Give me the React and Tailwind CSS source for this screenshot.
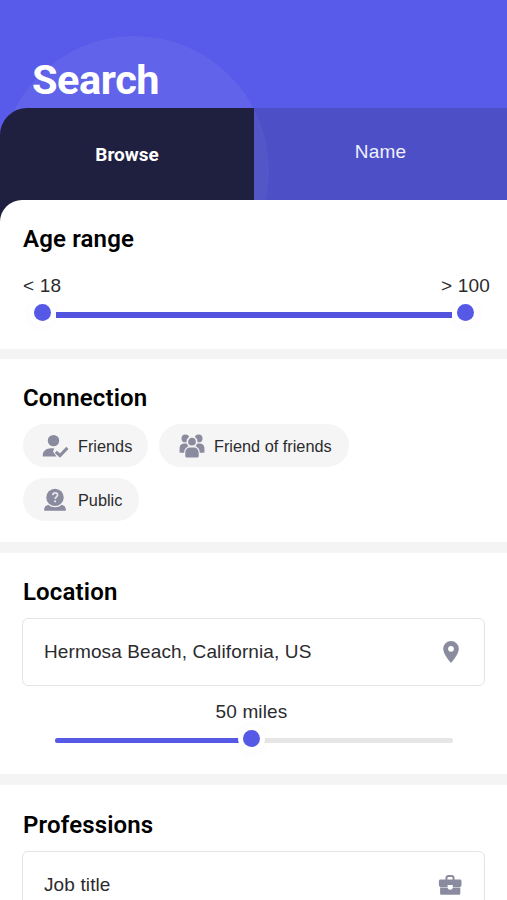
const roboto = "font-[Roboto,sans-serif]";

function Title({ children, className = "" }) {
  return (
    <h2 className={`${roboto} w-fit whitespace-nowrap text-[24px] leading-[28px] font-semibold tracking-[0.15px] text-black ${className}`}>
      {children}
    </h2>
  );
}

function FriendIcon() {
  return (
    <svg width="27" height="24" viewBox="0 0 27 24" className="shrink-0 fill-[#8b8b9f]">
      <circle cx="11.500" cy="6.600" r="5.700" />
      <path d="M.8 22.500v-1.500c0-4 3.600-6.800 8.200-6.800 1.300 0 2.500.1 3.500.5-1.700 1.500-1.600 3.200-.3 4.600l2.300 3.200z" />
      <path d="M13.800 17.800l4.200 3.700 7.400-7.600" fill="none" stroke="#8b8b9f" strokeWidth="3.100" />
    </svg>
  );
}

function GroupIcon() {
  return (
    <svg width="26" height="24" viewBox="0 0 26 24" className="shrink-0 fill-[#8b8b9f]">
      <circle cx="6.400" cy="4.400" r="3.900" />
      <circle cx="19.600" cy="4.400" r="3.900" />
      <path d="M.6 18.800v-4.600c0-3 2-4.600 4.900-4.600h3l1 2.300-2 1.500c-1.600 1.200-2.300 2.700-2.300 5.400z" />
      <path d="M25.400 18.800v-4.600c0-3-2-4.600-4.900-4.600h-3l-1 2.300 2 1.500c1.600 1.200 2.300 2.700 2.300 5.400z" />
      <circle cx="13" cy="7.700" r="4.700" className="stroke-[#f5f5f5]" strokeWidth="1.700" />
      <path d="M6.300 23.400v-4.600c0-3.400 2.200-5.300 5.200-5.300h3c3 0 5.200 1.900 5.200 5.300v3.200c0 .9-.5 1.400-1.400 1.400H7.700c-.9 0-1.400-.5-1.400-1.400z" />
    </svg>
  );
}

function PublicIcon() {
  return (
    <svg width="24" height="24" viewBox="0 0 24 24" className="mr-[2px] shrink-0 fill-[#8b8b9f]">
      <circle cx="12" cy="9.400" r="8.700" />
      <path d="M1.200 22.800v-1.600c0-2.300 1.700-3.900 4.200-4.500 2 1.800 4.100 2.500 6.600 2.500s4.600-.7 6.600-2.500c2.500.6 4.200 2.200 4.200 4.500v1.600z" />
      <path d="M9.700 7.200c.2-1.500 1.100-2.400 2.500-2.400 1.500 0 2.400.9 2.400 2.200 0 1.800-2.400 2.100-2.400 4" fill="none" stroke="#e6e6ec" strokeWidth="1.700" />
      <circle cx="12.100" cy="13.300" r="1.100" className="fill-[#e6e6ec]" />
    </svg>
  );
}

function PinIcon() {
  return (
    <svg width="16" height="22" viewBox="0 0 16 22" className="ml-[1px] shrink-0 fill-[#8b8b9f]">
      <path fillRule="evenodd" d="M8 0a7.800 7.800 0 0 0-7.800 7.800C.2 13.500 8 22 8 22s7.800-8.500 7.800-14.200A7.800 7.800 0 0 0 8 0zm0 4.900a2.900 2.900 0 1 1 0 5.800 2.900 2.900 0 0 1 0-5.800z" />
    </svg>
  );
}

function BriefcaseIcon() {
  return (
    <svg width="24" height="22" viewBox="0 0 24 22" className="shrink-0 fill-[#8b8b9f]">
      <path d="M8.400 6V4.200c0-1.300.9-2.200 2.200-2.200h2.800c1.300 0 2.200.9 2.200 2.200V6" fill="none" stroke="#8b8b9f" strokeWidth="2" />
      <path d="M2.500 5.400h19.400c1 0 1.600.6 1.600 1.600v4c0 1-.7 1.900-1.600 1.900h-7.100v-1.900H9.600v1.900H2.500c-.9 0-1.600-.9-1.600-1.900V7c0-1 .6-1.600 1.600-1.600z" />
      <path d="M2.100 13.600h7.500c.2 1.500 1.200 2.200 2.600 2.200s2.400-.7 2.600-2.200h7.500v5.600c0 1-.6 1.600-1.600 1.600h-17c-1 0-1.600-.6-1.600-1.600z" />
    </svg>
  );
}

function Chip({ icon, label, className = "" }) {
  return (
    <div className={`flex h-[43px] items-center rounded-full bg-[#f5f5f5] ${className}`}>
      <span className="flex w-[27px] justify-center">{icon}</span>
      <span className="ml-[9px] whitespace-nowrap text-[16.300px] leading-[20px] text-[#2b2b2e]">{label}</span>
    </div>
  );
}

function Thumb({ className }) {
  return (
    <span className={`absolute flex size-[27px] items-center justify-center rounded-full bg-white shadow-[0_1px_8px_rgba(0,0,0,0.03)] ${className}`}>
      <span className="size-[16.400px] rounded-full bg-[#5658e6]" />
    </span>
  );
}

function Field({ text, icon }) {
  return (
    <div className="mx-[22px] flex h-[68px] items-center justify-between rounded-[6px] border border-[#e4e4e6] bg-white pr-[22px] pl-[21px]">
      <span className="whitespace-nowrap text-[19px] leading-[24px] tracking-[0.120px] text-[#2b2b2e]">{text}</span>
      <span className="flex w-[24px] justify-center">{icon}</span>
    </div>
  );
}

export default function App() {
  return (
    <main className="h-[900px] w-[507px] overflow-hidden bg-[#f4f4f4] font-['Liberation_Sans',Arial,sans-serif]">
      <header className="relative h-[222px] overflow-hidden bg-[#585ae9]">
        <span className="absolute top-[36px] left-0 size-[269px] rounded-full bg-white/6" />
        <div className="relative flex h-[108px] items-start pt-[56px] pl-[32px]">
          <h1 className={`${roboto} text-[41.500px] leading-[48px] font-bold tracking-[-0.450px] text-white`}>Search</h1>
        </div>
        <nav className="relative flex h-[114px]">
          <div className="flex w-[254px] justify-center rounded-tl-[27px] bg-[#1f1f40] pt-[35px]">
            <span className={`${roboto} text-[19px] leading-[24px] font-bold text-white`}>Browse</span>
          </div>
          <div className="flex flex-1 justify-center bg-[#242c52]/24 pt-[32px]">
            <span className="text-[19px] leading-[24px] tracking-[0.150px] text-[#f0f0ff]">Name</span>
          </div>
        </nav>
      </header>

      <section className="relative -mt-[22px] h-[149px] rounded-tl-[22px] bg-white pt-[25px]">
        <Title className="ml-[23px]">Age range</Title>
        <div className="mt-[21px] flex justify-between pr-[17px] pl-[23px] text-[19px] leading-[24px] tracking-[0.200px] text-[#2b2b2e]">
          <span>&lt; 18</span>
          <span>&gt; 100</span>
        </div>
        <div className="relative mt-[1px] h-[27px] pt-[13px]">
          <div className="mr-[55px] ml-[56px] h-[6px] bg-[#5254df]" />
          <Thumb className="top-0 left-[29px]" />
          <Thumb className="top-0 left-[452px]" />
        </div>
      </section>

      <section className="mt-[10px] h-[183px] bg-white pt-[25px]">
        <Title className="ml-[23px]">Connection</Title>
        <div className="mt-[12px] flex flex-wrap gap-[11px] pr-[100px] pl-[23px]">
          <Chip className="w-[125px] pl-[19px]" icon={<FriendIcon />} label="Friends" />
          <Chip className="w-[190px] pl-[19px]" icon={<GroupIcon />} label="Friend of friends" />
          <Chip className="w-[116px] pl-[19px]" icon={<PublicIcon />} label="Public" />
        </div>
      </section>

      <section className="mt-[11px] h-[221px] bg-white pt-[25px]">
        <Title className="mb-[12px] ml-[23px]">Location</Title>
        <Field text="Hermosa Beach, California, US" icon={<PinIcon />} />
        <p className="mt-[14px] pr-[4px] text-center text-[19px] leading-[24px] tracking-[0.150px] text-[#2b2b2e]">50 miles</p>
        <div className="relative mt-[1px] h-[27px] pt-[13px]">
          <div className="mr-[54px] ml-[55px] flex h-[5px] overflow-hidden rounded-full bg-[#e6e6e7]">
            <span className="w-[197px] bg-[#5658e6]" />
          </div>
          <Thumb className="top-0 left-[238px]" />
        </div>
      </section>

      <section className="mt-[11px] h-[115px] overflow-hidden bg-white pt-[26px]">
        <Title className="mb-[12px] ml-[23px]">Professions</Title>
        <Field text="Job title" icon={<BriefcaseIcon />} />
      </section>
    </main>
  );
}
